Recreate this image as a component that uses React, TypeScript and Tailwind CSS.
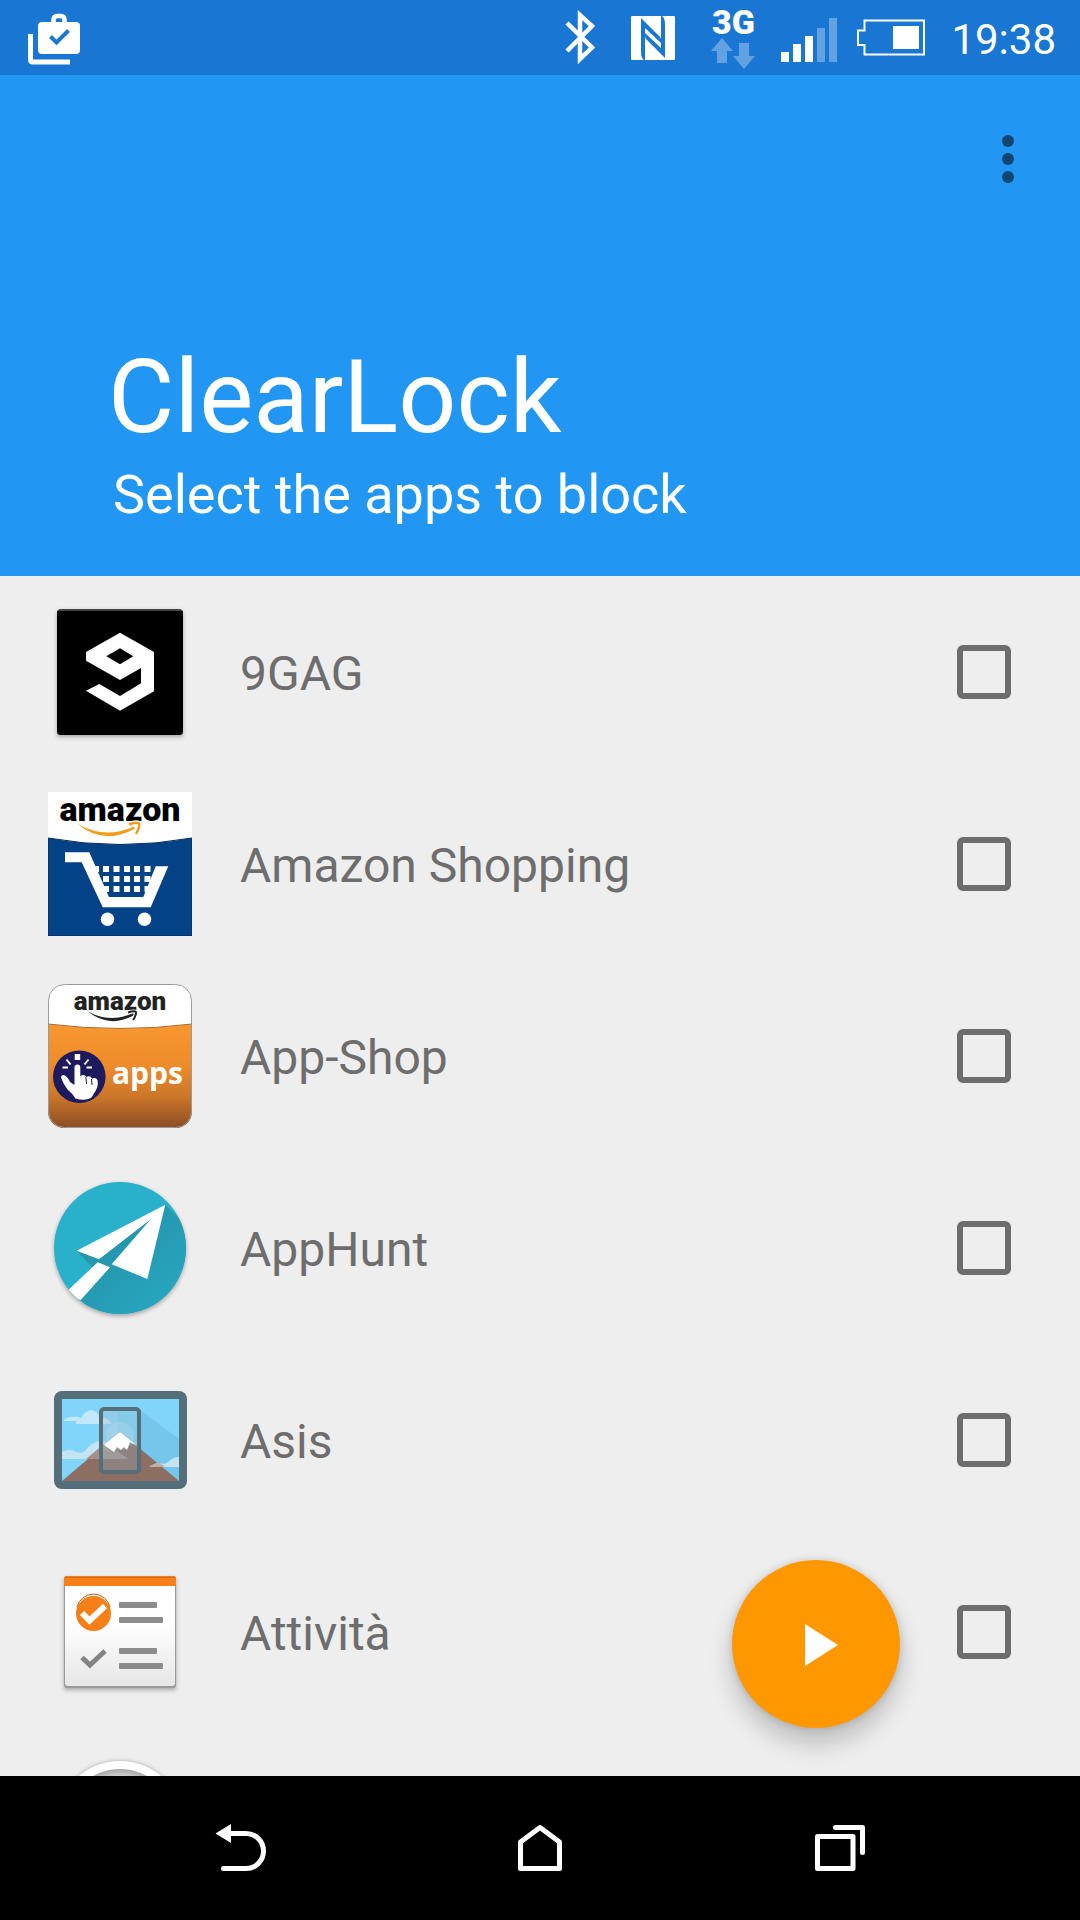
import { useState } from "react";
import type { ReactNode } from "react";

// --- STATUS BAR ICONS ---
const ShopIcon = () => (
  <svg className="h-[75px] w-14" viewBox="0 0 56 75">
    <path d="M4.5 34v25.5q0 2.5 2.5 2.5H44" fill="none" stroke="#fff" strokeWidth="5" />
    <path d="M27.5 24v-4q0-4 4-4h3q4 0 4 4v4" fill="none" stroke="#fff" strokeWidth="4.5" />
    <rect x="12" y="22" width="42" height="32" rx="4" fill="#fff" />
    <path d="M24.500 36.500l6 6L42.500 30.500" fill="none" stroke="#1976d2" strokeWidth="4" />
  </svg>
);

const BluetoothIcon = () => (
  <svg className="h-[75px] w-8" viewBox="0 0 32 75">
    <path d="M2 23L27 47.500 15 59V15L27 26 2 51" fill="none" stroke="#fff" strokeWidth="4.500" />
  </svg>
);

const NfcIcon = () => (
  <svg className="ml-[34px] h-11 w-11" viewBox="0 0 44 44">
    <rect width="44" height="44" rx="1" fill="#fff" />
    <path d="M10 2L29 21Q30 22 30 24V27L14 12V44H13Q10 42 10 36Z" fill="#1976d2" />
    <path d="M10 2L29 21Q30 22 30 24V27L14 12V44H13Q10 42 10 36Z" fill="#1976d2" transform="rotate(180 22 22)" />
  </svg>
);

const DataIcon = () => (
  <div className="ml-9 flex w-11 flex-col items-center">
    <span className="text-[34px] leading-8 font-black">3G</span>
    <svg className="h-8 w-11" viewBox="0 0 44 32">
      <path d="M11 0L22 13H16V25H6V13H0Z" fill="#62a1e2" />
      <path d="M33 31L22 18H28V5H38V18H44Z" fill="#62a1e2" />
    </svg>
  </div>
);

const SignalIcon = () => (
  <svg className="ml-[26px] h-[75px] w-14" viewBox="0 0 56 75">
    <path d="M0 52h8v10H0zM12 44h8v18h-8zM24 36h8v26h-8z" fill="#fff" />
    <path d="M36 28h8v34h-8zM48 18h8v44h-8z" fill="#62a1e2" />
  </svg>
);

const BatteryIcon = () => (
  <svg className="ml-5 h-[75px] w-[68px]" viewBox="0 0 68 75">
    <path d="M7.500 20.500H67V54.500H7.500V45H1V30.500H7.500Z" fill="none" stroke="#fff" strokeWidth="2" />
    <rect x="36" y="26" width="26" height="23" fill="#fff" />
  </svg>
);

// --- APP ICONS ---
const NineGagIcon = () => (
  <svg className="size-36 drop-shadow-[0_2px_2px_rgba(0,0,0,0.3)]" viewBox="0 0 144 144">
    <rect x="9" y="9" width="126" height="126" rx="4" fill="#444" />
    <path d="M9 11H135V131q0 4-4 4H13q-4 0-4-4Z" fill="#000" />
    <path
      fill="#fff"
      fillRule="evenodd"
      d="M72 32.700L106 52V91.300L72 110.700 38 90.700 51.300 84 72 96 93 83.300V68L72 80 38 60.700V52ZM72 48.300L58.300 56.300 72 64.300 85.300 56.300Z"
    />
  </svg>
);

const AmazonIcon = () => (
  <svg className="size-36 overflow-visible" viewBox="0 0 144 144">
    <rect width="144" height="144" fill="#fff" />
    <path d="M0 46Q72 59 144 46V144H0Z" fill="#034287" />
    <path d="M0 46Q72 59 144 46" fill="none" stroke="#062a58" />
    <path d="M.5 47V143.5H143.5V47" fill="none" stroke="#053570" />
    <text x="72" y="29" textAnchor="middle" fontSize="34" fontWeight="900" fill="#000">
      amazon
    </text>
    <path d="M28.700 31.500Q57 48 86 34.500L87 36.500Q56 54 28.700 31.500Z" fill="#f39c1b" />
    <path d="M81 32.500Q88 29.500 91 31.500 92 35 88 42" fill="none" stroke="#fff" strokeWidth="5" />
    <path d="M81 32.500Q88 29.500 91 31.500 92 35 88 42" fill="none" stroke="#f39c1b" strokeWidth="2.500" />
    <path
      fill="#fff"
      d="M17 60.300H41.300L61 105H95.300L107.700 74.300H120.300L102.700 115.300H54.700L33.700 70.300H17Z"
    />
    <path
      fill="#fff"
      d="M47 74h4v6h-4zM55 74h6v6h-6zM65.500 74h6v6h-6zM76 74h6v6h-6zM86 74h6v6h-6zM96.500 74h6v6h-6zM55 84h6v6h-6zM65.500 84h6v6h-6zM76 84h6v6h-6zM86 84h6v6h-6zM96.500 84h6v6h-6zM55 94h6v6h-6zM65.500 94h6v6h-6zM76 94h6v6h-6zM86 94h6v6h-6zM96.500 94h4v6h-4z"
    />
    <circle cx="59.500" cy="127.300" r="6.700" fill="#fff" />
    <circle cx="96.500" cy="127.300" r="6.700" fill="#fff" />
  </svg>
);

const AppShopIcon = () => (
  <svg className="size-36 overflow-visible" viewBox="0 0 144 144">
    <defs>
      <linearGradient id="shop-orange" x1="0" y1="0" x2="0" y2="1">
        <stop offset="0" stopColor="#f8962f" />
        <stop offset="0.4" stopColor="#ee8c2c" />
        <stop offset="0.7" stopColor="#cb762a" />
        <stop offset="1" stopColor="#8a4d24" />
      </linearGradient>
      <clipPath id="shop-clip">
        <rect width="144" height="144" rx="16" />
      </clipPath>
    </defs>
    <g clipPath="url(#shop-clip)">
      <rect width="144" height="144" fill="#fff" />
      <path d="M0 40Q72 49 144 40V144H0Z" fill="url(#shop-orange)" />
      <path d="M0 40Q72 49 144 40" fill="none" stroke="#a9692d" />
    </g>
    <rect x=".5" y=".5" width="143" height="143" rx="16" fill="none" stroke="#9b9b9b" />
    <text x="72" y="26" textAnchor="middle" fontSize="26" fontWeight="900" fill="#222">
      amazon
    </text>
    <path d="M39 27Q62 40 85 29L86 31Q62 45 39 27Z" fill="#222" />
    <path d="M80 28.500Q86 26.500 88 28 88.500 31 85 36" fill="none" stroke="#fff" strokeWidth="4" />
    <path d="M80 28.500Q86 26.500 88 28 88.500 31 85 36" fill="none" stroke="#222" strokeWidth="2" />
    <circle cx="31.300" cy="92.700" r="26.300" fill="#1d1a5e" />
    <path
      fill="#fff"
      d="M26.500 83.500q0-3 2.900-3 2.900 0 2.900 3V92q4-2.500 6 1 4-1.800 5.500 1.500 4-1.500 5.700 1.500 1.500 7-4 14-1.500 4-5 5-6 1.800-13-.5-3-5-8-9-4-5-6.500-12 0-3 3-2.500 4 2 6 7l4.500 3Z"
    />
    <path d="M37.800 93l.8 7M43.500 95l.5 6" stroke="#1d1a5e" strokeWidth="1" />
    <path d="M26.700 70h5.500v6h-5.500z" fill="#fff" />
    <path d="M18.500 75.500l4 5M40.500 75.500l-4 5M14.500 83.500h5.500M38.500 83.500h5.500" stroke="#fff" strokeWidth="2" />
    <text x="99.500" y="100" textAnchor="middle" fontSize="30" fontWeight="700" fill="#fff" className="font-['Open_Sans',sans-serif]">
      apps
    </text>
  </svg>
);

const AppHuntIcon = () => (
  <svg className="size-36 drop-shadow-[0_2px_2px_rgba(0,0,0,0.3)]" viewBox="0 0 144 144">
    <defs>
      <clipPath id="hunt-clip">
        <circle cx="72" cy="72" r="66" />
      </clipPath>
      <linearGradient id="hunt-shade" x1="0.3" y1="0.2" x2="0.9" y2="0.9">
        <stop offset="0" stopColor="#2494aa" />
        <stop offset="1" stopColor="#28a8c2" />
      </linearGradient>
    </defs>
    <g clipPath="url(#hunt-clip)">
      <rect width="144" height="144" fill="#29b0cb" />
      <path d="M117.300 28.700L144 55V144H53L32.700 124 49.700 97 28.700 74.700 51 83Z" fill="url(#hunt-shade)" />
      <path d="M117.300 28.700L28.700 74.700 51 83.300 102.700 43.300 63.700 88.300 99.300 103Z" fill="#fff" />
      <path d="M49.700 86.300L62 91.300 32.700 124 16 118Z" fill="#fff" />
    </g>
  </svg>
);

const AsisIcon = () => (
  <svg className="size-36" viewBox="0 -2 144 144">
    <rect x="6" y="21" width="133" height="98" rx="8" fill="#546e7a" />
    <rect x="14" y="29" width="117" height="82" fill="#81d4fa" />
    <path d="M92 40L131 69V111L92 80Z" fill="#76c5ea" />
    <path d="M15 51q3-4 10-4 4-1 8 1 4-7 10-8 6 1 8 6 8 1 13 8H28q-1-2 1-3Z" fill="#c3e8fa" />
    <path d="M14 82q7-4 14 0 6 2 9-1 6-9 15-10 12 1 17 8L80 89H14Z" fill="#c3e4f5" />
    <path d="M72 62L131 111H14Z" fill="#8d6e63" />
    <path d="M56 74Q68 79 80 89H38Z" fill="#a89189" />
    <path d="M101 97q5-4 11-4 5 2 8-1 5-5 11-5V97Z" fill="#c3e4f5" />
    <path d="M101 97q5-4 11-4L117 97Z" fill="#bfaea8" />
    <circle cx="72" cy="66" r="14" fill="#fff" opacity=".2" />
    <path d="M54 41H70V72L54 82Z" fill="#fff" opacity=".12" />
    <rect x="53" y="39" width="38" height="63" rx="3" fill="#8fb3c4" fillOpacity=".3" stroke="#546e7a" strokeWidth="4" />
    <path d="M72 62L88 75 85 74 82 72 79 80 76 77 73 80 69 77 66 82 56 75Z" fill="#fff" />
  </svg>
);

const TasksIcon = () => (
  <svg className="size-36 drop-shadow-[0_2px_2px_rgba(0,0,0,0.3)]" viewBox="0 0 144 144">
    <defs>
      <linearGradient id="tasks-paper" x1="0" y1="0" x2="0" y2="1">
        <stop offset="0.4" stopColor="#fff" />
        <stop offset="1" stopColor="#e6e6e6" />
      </linearGradient>
    </defs>
    <rect x="16" y="16" width="112" height="112" rx="3" fill="#9a9a9a" />
    <path d="M17 20H127V123q0 3-3 3H20q-3 0-3-3Z" fill="url(#tasks-paper)" />
    <path d="M16 26V19q0-3 3-3H125q3 0 3 3V26Z" fill="#f77f18" />
    <path d="M17 17.500H127" stroke="#c76a1d" />
    <circle cx="45.500" cy="53.500" r="17.500" fill="#f77f18" />
    <path d="M29 47a17 17 0 0 1 33 0" fill="none" stroke="#c05f12" strokeWidth="1" />
    <path d="M34 53L41.500 60.500 57 46" fill="none" stroke="#fff" strokeWidth="6" />
    <path d="M34 97.500L42 105 57 91" fill="none" stroke="#838383" strokeWidth="5" />
    <g fill="#8c8c8c">
      <rect x="71" y="42" width="38" height="6" rx="1" />
      <rect x="71" y="57" width="44" height="6" rx="1" />
      <rect x="71" y="88" width="38" height="6" rx="1" />
      <rect x="71" y="103" width="44" height="6" rx="1" />
    </g>
  </svg>
);

const DialIcon = () => (
  <svg className="size-36 drop-shadow-[0_0_2px_rgba(0,0,0,0.3)]" viewBox="0 0 144 144">
    <defs>
      <radialGradient id="dial-face">
        <stop offset="0.8" stopColor="#e4e4e4" />
        <stop offset="1" stopColor="#a8a8a8" />
      </radialGradient>
    </defs>
    <circle cx="72" cy="73" r="64" fill="#fff" />
    <circle cx="72" cy="73" r="56" fill="url(#dial-face)" />
  </svg>
);

interface AppEntry {
  name: string;
  icon: ReactNode;
}

const apps: AppEntry[] = [
  { name: "9GAG", icon: <NineGagIcon /> },
  { name: "Amazon Shopping", icon: <AmazonIcon /> },
  { name: "App-Shop", icon: <AppShopIcon /> },
  { name: "AppHunt", icon: <AppHuntIcon /> },
  { name: "Asis", icon: <AsisIcon /> },
  { name: "Attività", icon: <TasksIcon /> },
];

export default function App() {
  const [blocked, setBlocked] = useState<string[]>([]);

  const toggle = (name: string) => {
    setBlocked((prev) => (prev.includes(name) ? prev.filter((n) => n !== name) : [...prev, name]));
  };

  return (
    <div className="flex h-screen flex-col overflow-hidden bg-[#eeeeee] font-[Roboto,sans-serif]">
      {/* Status bar */}
      <div className="flex h-[75px] shrink-0 items-center justify-between bg-[#1976d2] pr-6 pl-[26px] text-white">
        <ShopIcon />
        <div className="flex items-center">
          <BluetoothIcon />
          <NfcIcon />
          <DataIcon />
          <SignalIcon />
          <BatteryIcon />
          <time className="ml-[26px] pt-1 text-[42px] leading-[75px]">19:38</time>
        </div>
      </div>

      {/* Header */}
      <header className="flex shrink-0 flex-col bg-[#2196f3] pt-9 pb-[49px] text-white">
        <button aria-label="More options" className="mr-6 flex size-24 items-center justify-center self-end">
          <svg className="h-12 w-3" viewBox="0 0 12 48" fill="#0f4571">
            <circle cx="6" cy="6" r="6" />
            <circle cx="6" cy="24" r="6" />
            <circle cx="6" cy="42" r="6" />
          </svg>
        </button>
        <div className="mt-[130px] px-[108px]">
          <h1 className="text-[102px] leading-[120px]">ClearLock</h1>
          <p className="mt-1.5 pl-[5px] text-[54px] leading-[64px]">Select the apps to block</p>
        </div>
      </header>

      {/* App list */}
      <main className="relative min-h-0 flex-1">
        <ul className="h-full overflow-hidden">
          {apps.map((app) => (
            <li key={app.name}>
              <label className="flex h-48 items-center pr-[69px] pl-12">
                {app.icon}
                <span className="ml-12 flex-1 pt-1 text-[48px] leading-[56px] text-[#6d6d6d]">{app.name}</span>
                <input
                  type="checkbox"
                  checked={blocked.includes(app.name)}
                  onChange={() => toggle(app.name)}
                  className="size-[54px] appearance-none rounded-md border-6 border-[#6d6d6d] checked:bg-[#2196f3]"
                />
              </label>
            </li>
          ))}
          <li className="flex h-48 items-center pl-12">
            <DialIcon />
          </li>
        </ul>

        <button
          aria-label="Start"
          className="absolute right-[180px] bottom-12 flex size-[168px] items-center justify-center rounded-full bg-[#ff9800] shadow-[0_16px_24px_rgba(0,0,0,0.2),0_0_8px_rgba(0,0,0,0.14)]"
        >
          <svg className="size-18" viewBox="0 0 72 72">
            <path d="M25 16L58 37 25 58Z" fill="#fff" />
          </svg>
        </button>
      </main>

      {/* Navigation bar */}
      <nav className="grid h-36 shrink-0 grid-cols-3 place-items-center bg-black px-[90px]">
        <button aria-label="Back">
          <svg className="size-18" viewBox="0 0 72 72" fill="none" stroke="#fff" strokeWidth="5" strokeLinecap="round">
            <path d="M24 21.500H42a17.500 17.500 0 0 1 0 35H19.500" />
            <path d="M11.500 21.500L27 12V31Z" fill="#fff" stroke="none" />
          </svg>
        </button>
        <button aria-label="Home">
          <svg className="size-18" viewBox="0 0 72 72" fill="none" stroke="#fff" strokeWidth="5" strokeLinejoin="round">
            <path d="M16.500 56.500V30L36 15.500 55.500 30V56.500Z" />
          </svg>
        </button>
        <button aria-label="Recent apps">
          <svg className="size-18" viewBox="0 0 72 72" fill="none" stroke="#fff" strokeWidth="5" strokeLinecap="round" strokeLinejoin="round">
            <rect x="13.500" y="24.500" width="35.500" height="32" />
            <path d="M31.500 15.500H58.500V40.500" />
          </svg>
        </button>
      </nav>
    </div>
  );
}
